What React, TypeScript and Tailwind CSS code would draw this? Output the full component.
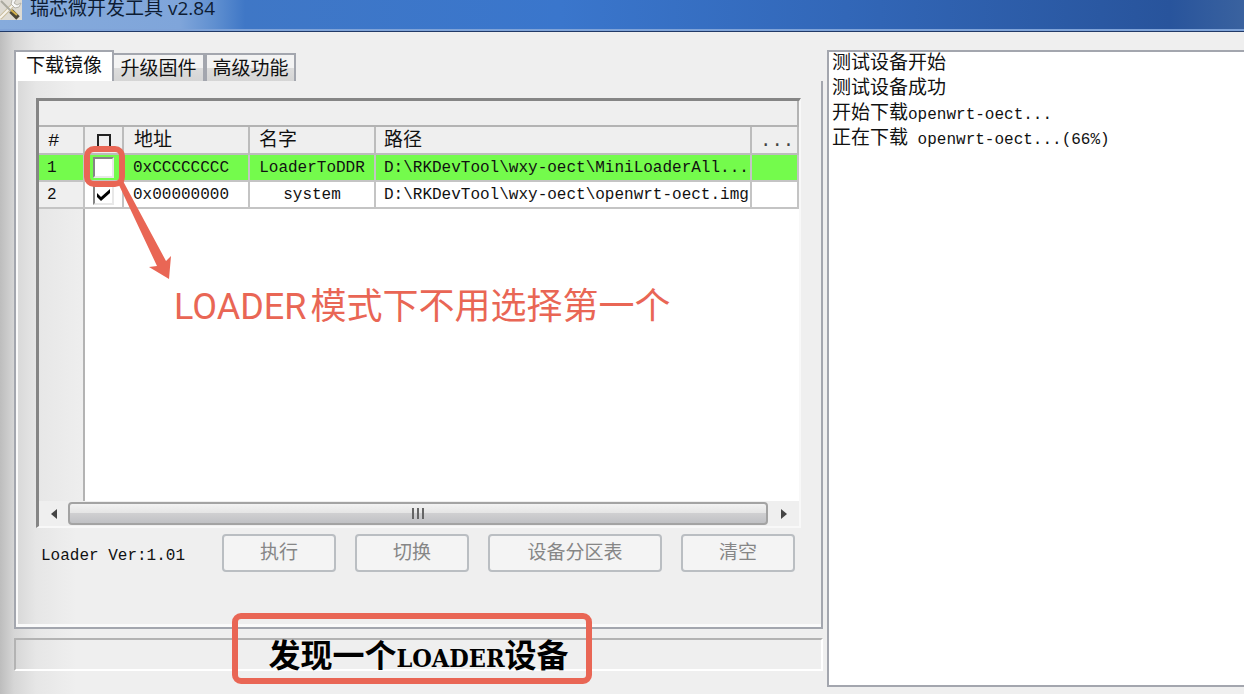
import type { ReactNode } from "react";

const rows = [
  { id: 1, checked: false, address: "0xCCCCCCCC", name: "LoaderToDDR", path: "D:\\RKDevTool\\wxy-oect\\MiniLoaderAll..." },
  { id: 2, checked: true, address: "0x00000000", name: "system", path: "D:\\RKDevTool\\wxy-oect\\openwrt-oect.img" },
];

const logLines = ["测试设备开始", "测试设备成功", "开始下载openwrt-oect...", "正在下载 openwrt-oect...(66%)"];

function TitleBar() {
  return (
    <header className="flex h-8 shrink-0 items-start gap-2 border-b border-[#213a68] bg-[linear-gradient(to_right,#86abdc_0px,#7fa5da_180px,#5f8fd0_215px,#3f77c6_245px,#3a76cc_45%,#3267b8_68%,#28549c_94%,#3a629f_100%)] shadow-[inset_0_-2px_0_#7fa3d8]">
      <svg className="h-5 w-[22px] shrink-0" viewBox="0 0 22 20" aria-hidden="true">
        <rect width="22" height="20" fill="#dedbd3" />
        <path d="M0 18 L13 5" stroke="#c9bd9c" strokeWidth="4" />
        <path d="M0 18 L13 5" stroke="#f7f4ec" strokeWidth="2" />
        <path d="M12 0 L11 4 L15 8 L19 7 L21 3 L17 5 L14 3 L16 0" fill="#f8f8f8" stroke="#b4b2aa" />
        <path d="M1 1 L11 11" stroke="#aaa99f" strokeWidth="2" />
        <path d="M11 11 L18 18" stroke="#4c4736" strokeWidth="5" />
        <path d="M11 10 L17 15" stroke="#d2b14c" strokeWidth="2" />
      </svg>
      <h1 className="font-['Open_Sans','Noto_Sans_CJK_SC',sans-serif] text-[19px] leading-4 text-[#0d1c33]">
        瑞芯微开发工具 v2.84
      </h1>
    </header>
  );
}

function Tabs() {
  const idle =
    "mt-[3px] h-7 border-2 border-b-0 border-[#a3a6ae] bg-[linear-gradient(to_bottom,#f3f3f3_50%,#dddddd_50%,#d5d5d5)] pt-px leading-7";
  return (
    <div role="tablist" className="flex h-[31px] items-start">
      <button role="tab" aria-selected="true" className="h-[31px] w-[100px] border-2 border-b-0 border-[#a3a6ae] bg-white pt-px leading-7">
        下载镜像
      </button>
      <button role="tab" aria-selected="false" className={`${idle} w-[91px] border-l-0`}>
        升级固件
      </button>
      <button role="tab" aria-selected="false" className={`${idle} w-[91px]`}>
        高级功能
      </button>
    </div>
  );
}

function CheckCell({ checked, label }: { checked: boolean; label: string }) {
  return (
    <span className="relative inline-grid size-[21px] place-items-center align-middle">
      <input
        type="checkbox"
        aria-label={label}
        defaultChecked={checked}
        className="peer size-[21px] appearance-none border-2 border-t-[#858585] border-r-[#e8e8e8] border-b-[#e8e8e8] border-l-[#858585] bg-white"
      />
      <svg viewBox="0 0 13 12" className="pointer-events-none absolute hidden h-3 w-[13px] peer-checked:block" aria-hidden="true">
        <path d="M0 4 L4 8 L13 0 V4 L4 12 L0 8 Z" fill="#000" />
      </svg>
    </span>
  );
}

function ImageTable() {
  const head = "border-r-2 border-b-2 border-[#bcbcbc] pt-[2px] text-left font-normal";
  const cell = "border-r-2 border-b-2 border-[#c4c4c4] whitespace-nowrap";
  return (
    <table className="w-full table-fixed border-separate border-spacing-0">
      <colgroup>
        <col className="w-[46px]" />
        <col className="w-[39px]" />
        <col className="w-[126px]" />
        <col className="w-[126px]" />
        <col />
        <col className="w-[47px]" />
      </colgroup>
      <thead>
        <tr className="h-7">
          <th className={`${head} pl-[9px]`}>#</th>
          <th className={`${head} pl-3 leading-none`}>
            <input type="checkbox" aria-label="全选" className="block size-[14px] appearance-none border-2 border-[#222]" />
          </th>
          <th className={`${head} pl-[10px]`}>地址</th>
          <th className={`${head} pl-[9px]`}>名字</th>
          <th className={`${head} pl-2`}>路径</th>
          <th className={`${head} pl-2 text-[#444]`}>...</th>
        </tr>
      </thead>
      <tbody>
        {rows.map((row) => (
          <tr key={row.id} className={row.id === 1 ? "h-[27px] bg-[#74fb4c]" : "h-[27px] bg-white"}>
            <td className={row.id === 1 ? `${cell} pl-2` : `${cell} bg-[#efefef] pl-2`}>{row.id}</td>
            <td className={`${cell} pl-2 leading-none`}>
              <CheckCell checked={row.checked} label={row.name} />
            </td>
            <td className={`${cell} pl-[9px]`}>{row.address}</td>
            <td className={`${cell} text-center`}>{row.name}</td>
            <td className={`${cell} pl-2`}>{row.path}</td>
            <td className={cell}></td>
          </tr>
        ))}
      </tbody>
    </table>
  );
}

function ScrollBar() {
  return (
    <div className="flex h-[25px] shrink-0 items-stretch bg-[#efefef]">
      <button aria-label="向左滚动" className="grid w-[29px] place-items-center">
        <svg viewBox="0 0 6 10" className="h-[10px] w-[6px]" aria-hidden="true">
          <path d="M6 0 V10 L0 5 Z" fill="#444" />
        </svg>
      </button>
      <div className="my-px flex flex-1 items-center justify-center gap-[3px] rounded-sm border-2 border-[#a3a3a3] bg-[linear-gradient(to_bottom,#f2f2f2,#e5e5e5_45%,#cfcfd1_50%,#c0c1c4)]">
        <span className="h-[11px] w-[2px] bg-[#666]" />
        <span className="h-[11px] w-[2px] bg-[#666]" />
        <span className="h-[11px] w-[2px] bg-[#666]" />
      </div>
      <button aria-label="向右滚动" className="grid w-[31px] place-items-center">
        <svg viewBox="0 0 6 10" className="h-[10px] w-[6px]" aria-hidden="true">
          <path d="M0 0 V10 L6 5 Z" fill="#444" />
        </svg>
      </button>
    </div>
  );
}

function ActionButton({ wide, children }: { wide?: boolean; children: ReactNode }) {
  return (
    <button
      disabled
      className={`${wide ? "w-[174px]" : "w-[114px]"} h-[38px] rounded-[4px] border-2 border-[#babec2] bg-[#f4f4f4] pt-[2px] text-[#868686]`}
    >
      {children}
    </button>
  );
}

function Annotations() {
  return (
    <div className="pointer-events-none">
      <div className="absolute top-[146px] left-[84px] size-[41px] rounded-[10px] border-6 border-[#e96655]" />
      <svg className="absolute top-[180px] left-[116px] h-[100px] w-[56px]" viewBox="0 0 56 100" aria-hidden="true">
        <path d="M2 3 L7 1 L50 81 L55 76 L53 99 L33 87 L41 86 Z" fill="#e96655" />
      </svg>
      <p className="absolute top-[278px] left-[174px] flex items-baseline gap-1 leading-[50px] whitespace-nowrap text-[#e96655]">
        <span className="font-[Roboto,sans-serif] text-[36px]">LOADER</span>
        <span className="font-['Noto_Sans_CJK_SC',sans-serif] text-[36px]">模式下不用选择第一个</span>
      </p>
    </div>
  );
}

export default function App() {
  return (
    <div className="relative flex min-h-screen flex-col overflow-hidden bg-[#efefef] bg-[linear-gradient(to_right,#bdbdbd_0px,#d6d6d6_14px,#e6e6e6_36px,#efefef_76px)] font-['Liberation_Mono','Noto_Sans_CJK_SC',monospace] text-base text-[#111]">
      <TitleBar />
      <div className="grid flex-1 grid-cols-[827fr_417fr] pt-[18px] pb-[7px]">
        <main className="flex min-w-0 flex-col pr-1 pb-4 pl-[14px]">
          <div className="text-[19px]">
            <Tabs />
          </div>
          <section className="flex flex-1 flex-col border-2 border-t-0 border-[#a3a6ae] px-5 pt-[17px] shadow-[inset_2px_-3px_0_#fafafa]">
            <div className="flex h-[430px] flex-col border-t-[3px] border-r-2 border-b-2 border-l-[3px] border-t-[#858585] border-r-[#f8f8f8] border-b-[#f8f8f8] border-l-[#858585] bg-white">
              <div className="h-[26px] shrink-0 border-r-2 border-b-2 border-[#b3b3b3] bg-[#efefef]" />
              <div className="[&_th]:bg-[#efefef] [&_th]:text-[19px] [&_th]:leading-6">
                <ImageTable />
              </div>
              <div className="w-[46px] flex-1 border-r-2 border-[#b3b3b3] bg-[linear-gradient(to_right,#e7e7e7,#eeeeee)]" />
              <ScrollBar />
            </div>
            <div className="flex items-end justify-between pt-[6px] pr-[6px] pl-[5px]">
              <span className="w-[160px] leading-8 whitespace-nowrap">Loader Ver:1.01</span>
              <div className="flex gap-[19px] text-[19px]">
                <ActionButton>执行</ActionButton>
                <ActionButton>切换</ActionButton>
                <ActionButton wide>设备分区表</ActionButton>
                <ActionButton>清空</ActionButton>
              </div>
            </div>
          </section>
          <div className="relative mt-[9px] h-[33px] border-2 border-t-[#b3b3b3] border-r-white border-b-white border-l-[#b3b3b3]">
            <p role="status" className="text-center font-['DejaVu_Serif_Condensed','Noto_Sans_CJK_SC',serif] text-[32px] leading-8 font-bold text-black">
              发现一个<span className="text-[25px]">LOADER</span>设备
            </p>
            <div className="pointer-events-none absolute -top-[27px] left-[216px] h-[71px] w-[360px] rounded-[9px] border-6 border-[#e96655]" />
          </div>
        </main>
        <aside aria-label="日志" className="min-w-0 border-2 border-r-0 border-[#a3a6ae] bg-white pl-[3px]">
          {logLines.map((line) => (
            <p key={line} className="h-[25px] text-[19px] leading-[25px] whitespace-pre">
              {line.split(/([\u4e00-\u9fff]+)/).map((part, i) =>
                i % 2 === 1 ? (
                  part
                ) : (
                  <span key={i} className="text-base leading-none">{part}</span>
                ),
              )}
            </p>
          ))}
        </aside>
      </div>
      <Annotations />
    </div>
  );
}
